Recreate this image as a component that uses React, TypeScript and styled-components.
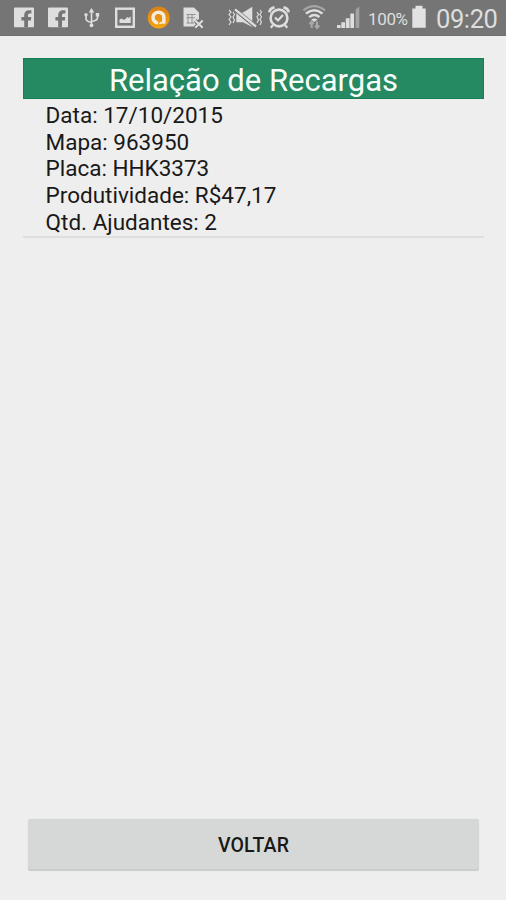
import React from "react";
import styled, { createGlobalStyle } from "styled-components";

const GlobalStyle = createGlobalStyle`
  * { box-sizing: border-box; }
  body {
    margin: 0;
    background: #eeeeee;
    font-family: Roboto, "Liberation Sans", sans-serif;
  }
`;

const Screen = styled.div`
  display: flex;
  flex-direction: column;
  height: 100vh;
  min-height: 900px;
`;

const StatusBar = styled.header`
  display: flex;
  flex: none;
  height: 36px;
  background: #757575;
  border-bottom: 1px solid #707070;
  color: #dedede;
`;

const Icon = styled.svg<{ $gap: number }>`
  display: block;
  flex: none;
  height: 35px;
  margin-left: ${(p) => p.$gap}px;
  fill: none;
  stroke: none;
`;

const BatteryLevel = styled.span`
  width: 41px;
  margin-left: 8px;
  font-size: 17px;
  line-height: 38px;
  letter-spacing: -0.35px;
  white-space: nowrap;
`;

const Clock = styled.span`
  margin-left: 10px;
  font-size: 25.5px;
  line-height: 38px;
  letter-spacing: -0.4px;
`;

const Content = styled.main`
  display: flex;
  flex: 1;
  flex-direction: column;
  padding: 22px 22px 29px 23px;
`;

const Title = styled.h1`
  height: 41px;
  margin: 0;
  background: #258962;
  border: 1px solid #158056;
  color: #f8fffb;
  font-size: 31px;
  font-weight: 400;
  line-height: 43px;
  text-align: center;
`;

const Record = styled.dl`
  margin: 0;
  padding: 3px 0 0 22.6px;
  height: 139px;
  border-bottom: 2px solid #dfdfdf;
  color: #191919;
  font-size: 22.5px;
  line-height: 26.7px;
`;

const Field = styled.div`
  display: flex;
  gap: 5.5px;
`;

const Label = styled.dt``;

const Value = styled.dd`
  margin: 0;
`;

const BackButton = styled.button`
  height: 52px;
  margin: auto 5px 0;
  padding: 0;
  border: 0;
  border-radius: 3px;
  background: #d6d8d7;
  box-shadow: inset 0 -2px 0 #cbcccb, 0 0 1px #cccccc;
  color: #181818;
  font-family: inherit;
  font-size: 19.5px;
  font-weight: 500;
  line-height: 54px;
  letter-spacing: 0.15px;
`;

const light = "#dedede";

type GlyphProps = { x: number; width: number; gap: number; children: React.ReactNode };

const Glyph = ({ x, width, gap, children }: GlyphProps) => (
  <Icon $gap={gap} width={width} viewBox={`${x} 0 ${width} 35`} aria-hidden="true">
    {children}
  </Icon>
);

const Facebook = ({ gap }: { gap: number }) => (
  <Glyph x={0} width={20} gap={gap}>
    <rect y="7.5" width="20" height="19.8" rx="1" fill={light} />
    <path
      d="M10.2 27.3V20.6H7.4V17H10.2V15.2C10.2 12 12.2 10.2 15 10.2H17.4V13.6H15.8C14.6 13.6 14 14.2 14 15.4V17H17.3L16.9 20.6H14V27.3Z"
      fill="#757575"
    />
  </Glyph>
);

const fields = [
  ["Data:", "17/10/2015"],
  ["Mapa:", "963950"],
  ["Placa:", "HHK3373"],
  ["Produtividade:", "R$47,17"],
  ["Qtd. Ajudantes:", "2"],
];

export default function App() {
  return (
    <Screen>
      <GlobalStyle />
      <StatusBar>
        <Facebook gap={14} />
        <Facebook gap={14} />
        <Glyph x={84} width={16} gap={16}>
          <path
            d="M91.5 11V26M86 15V18.5Q86 21.5 91.5 22.5M97.5 15V18Q97.5 20.5 91.5 21.5"
            stroke={light}
            strokeWidth="1.6"
          />
          <path d="M91.5 8L94.3 12.5H88.7ZM95.8 13H99.2V16.4H95.8Z" fill={light} />
          <circle cx="86" cy="14.7" r="1.7" fill={light} />
          <circle cx="91.5" cy="25.3" r="1.9" fill={light} />
        </Glyph>
        <Glyph x={115} width={20} gap={15}>
          <rect x="116.2" y="8.7" width="17.6" height="18.1" stroke={light} strokeWidth="2.4" />
          <path d="M119.5 23V19.5L121.5 18.5L124 20L127.5 17L128.5 18L130.7 16.5V23Z" fill={light} />
        </Glyph>
        <Glyph x={147} width={23} gap={12}>
          <defs>
            <linearGradient id="amber" x1="0" y1="0" x2="0" y2="1">
              <stop offset="0" stopColor="#d97f18" />
              <stop offset="1" stopColor="#f5a511" />
            </linearGradient>
          </defs>
          <circle cx="158.7" cy="17.5" r="11" fill="url(#amber)" />
          <path
            d="M156.6 22.6C152.9 21.2 151.9 16.8 154.2 14.1C156.5 11.4 160.9 11.5 163 14.3C164.2 15.9 163.9 18 163.9 22.2"
            stroke="#f5eddb"
            strokeWidth="3.5"
            strokeLinecap="round"
          />
          <path d="M159.3 23.4Q162.8 23.3 163.4 20" stroke="#f5eddb" strokeWidth="1.6" />
        </Glyph>
        <Glyph x={183} width={21} gap={13}>
          <path d="M183.5 7.5H194L199 12.5V19L195 22L197 26.5H183.5Z" fill={light} />
          <path
            d="M186.5 14.5H195.5M186.5 17.7H195M188 14V23.5M192 14V23.5M186.5 23H194"
            stroke="#929292"
            strokeWidth="1"
          />
          <path d="M195.2 20.5L202.7 27.8M202.7 20.5L195.2 27.8" stroke="#757575" strokeWidth="4" />
          <path d="M195.2 20.5L202.7 27.8M202.7 20.5L195.2 27.8" stroke={light} strokeWidth="2" />
        </Glyph>
        <Glyph x={228} width={34} gap={24}>
          <path
            d="M229 10L231 12L229 14.5L231 17L229 19.5L231 22L229 25M233 12L234.5 14.5L233 17L234.5 20L233 23M257 12L258.5 14.5L257 17L258.5 20L257 23M260 10L261.5 12L260 14.5L261.5 17L260 19.5L261.5 22L260 25"
            stroke={light}
            strokeWidth="1.2"
          />
          <path d="M236.3 12.5H243L252.3 6.8V27L243 22.3H236.3Z" fill={light} />
          <path d="M235.5 10L256 27" stroke="#757575" strokeWidth="4.2" />
          <path d="M235 9.3L256 26.5" stroke={light} strokeWidth="2.3" />
        </Glyph>
        <Glyph x={268} width={22} gap={6}>
          <circle cx="279" cy="18" r="8.4" stroke={light} strokeWidth="2.6" />
          <path
            d="M269.4 12.3Q269.9 8 274.5 7.4M283.5 7.4Q288.1 8 288.6 12.3"
            stroke={light}
            strokeWidth="2.8"
          />
          <path d="M275 17.5L278 20.5L283 15M273 25L270.8 27.8M285 25L287.2 27.8" stroke={light} strokeWidth="2.2" />
        </Glyph>
        <Glyph x={303} width={23} gap={13}>
          <path d="M303.5 10.3Q314 1.8 325 10.3" stroke="#a5a5a5" strokeWidth="2.2" />
          <path d="M306 13.6Q314.3 7 322.5 13.6M309.2 17.1Q314.3 13 319.5 17.1" stroke={light} strokeWidth="2.5" />
          <path d="M311.2 19.6Q314.3 17.5 317.5 19.6L314.3 22Z" fill={light} />
          <path
            d="M311.7 28V21.5M309.5 24L311.7 21.5L313.7 24M317 21.5V28M315 25.5L317 28L319.3 25.5"
            stroke="#a8a8a8"
            strokeWidth="2"
          />
        </Glyph>
        <Glyph x={337} width={23} gap={11}>
          <path d="M337 25H340.6V28H337ZM341.3 22.3H345V28H341.3ZM345.8 18.3H349.6V28H345.8ZM350.3 13.5H354V28H350.3Z" fill={light} />
          <path d="M355.6 9.5L359.3 6.5V28H355.6Z" fill="#a2a2a2" />
        </Glyph>
        <BatteryLevel>100%</BatteryLevel>
        <Glyph x={412} width={14} gap={3}>
          <path d="M412.3 8.5H415.5V5.8H422.5V8.5H425.7V27.7H412.3Z" fill="#e2e2e2" />
        </Glyph>
        <Clock>09:20</Clock>
      </StatusBar>
      <Content>
        <Title>Relação de Recargas</Title>
        <Record>
          {fields.map(([label, value]) => (
            <Field key={label}>
              <Label>{label}</Label>
              <Value>{value}</Value>
            </Field>
          ))}
        </Record>
        <BackButton type="button">VOLTAR</BackButton>
      </Content>
    </Screen>
  );
}
